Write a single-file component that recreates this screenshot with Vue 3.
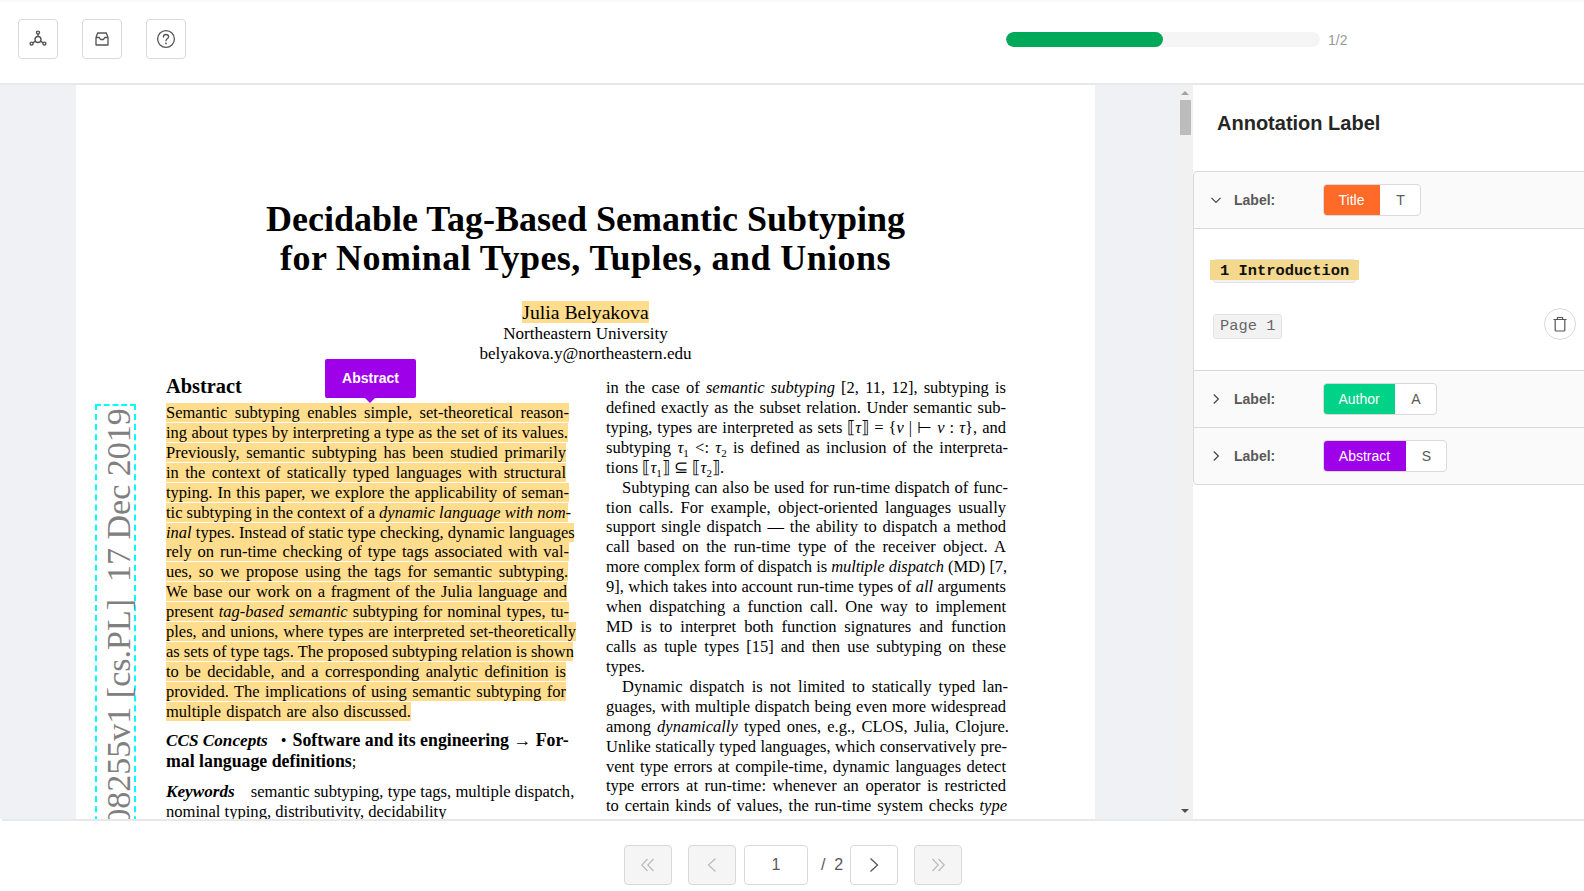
<script setup>
const leftLines = [
  ['Semantic subtyping enables simple, set-theoretical reason-', 403],
  ['ing about types by interpreting a type as the set of its values.', 402],
  ['Previously, semantic subtyping has been studied primarily', 400],
  ['in the context of statically typed languages with structural', 400],
  ['typing. In this paper, we explore the applicability of seman-', 403],
  ['tic subtyping in the context of a *dynamic language with nom-*', 402],
  ['*inal* types. Instead of static type checking, dynamic languages', 408],
  ['rely on run-time checking of type tags associated with val-', 403],
  ['ues, so we propose using the tags for semantic subtyping.', 402],
  ['We base our work on a fragment of the Julia language and', 401],
  ['present *tag-based semantic* subtyping for nominal types, tu-', 403],
  ['ples, and unions, where types are interpreted set-theoretically', 410],
  ['as sets of type tags. The proposed subtyping relation is shown', 407],
  ['to be decidable, and a corresponding analytic definition is', 400],
  ['provided. The implications of using semantic subtyping for', 400],
  ['multiple dispatch are also discussed.', 245]
]
const rightLines = [
  ['in the case of *semantic subtyping* [2, 11, 12], subtyping is', 400],
  ['defined exactly as the subset relation. Under semantic sub-', 400],
  ['typing, types are interpreted as sets ⟦*τ*⟧ = {*ν* | ⊢ *ν* : *τ*}, and', 400],
  ['subtyping *τ*~1~ <: *τ*~2~ is defined as inclusion of the interpreta-', 402],
  ['tions ⟦*τ*~1~⟧ ⊆ ⟦*τ*~2~⟧.', 118],
  ['Subtyping can also be used for run-time dispatch of func-', 386, 'indent'],
  ['tion calls. For example, object-oriented languages usually', 400],
  ['support single dispatch — the ability to dispatch a method', 400],
  ['call based on the run-time type of the receiver object. A', 400],
  ['more complex form of dispatch is *multiple dispatch* (MD) [7,', 401, 'tight'],
  ['9], which takes into account run-time types of *all* arguments', 400],
  ['when dispatching a function call. One way to implement', 400],
  ['MD is to interpret both function signatures and function', 400],
  ['calls as tuple types [15] and then use subtyping on these', 400],
  ['types.', 39],
  ['Dynamic dispatch is not limited to statically typed lan-', 386, 'indent'],
  ['guages, with multiple dispatch being even more widespread', 400],
  ['among *dynamically* typed ones, e.g., CLOS, Julia, Clojure.', 403],
  ['Unlike statically typed languages, which conservatively pre-', 401],
  ['vent type errors at compile-time, dynamic languages detect', 400],
  ['type errors at run-time: whenever an operator is restricted', 400],
  ['to certain kinds of values, the run-time system checks *type*', 401]
]
function parse(s) {
  return s.split(/(\*[^*]*\*|~[^~]*~)/).filter(Boolean).map(p => {
    if (p[0] === '*') return { t: p.slice(1, -1), k: 'i' }
    if (p[0] === '~') return { t: p.slice(1, -1), k: 'sub' }
    return { t: p, k: 'span' }
  })
}
const left = leftLines.map(([s, w]) => ({ segs: parse(s), w }))
const right = rightLines.map(([s, w, c]) => ({ segs: parse(s), w, c }))
const labels = [
  { name: 'Title', key: 'T', cls: 'orange', open: true, w: 57, kw: 41 },
  { name: 'Author', key: 'A', cls: 'green', open: false, w: 72, kw: 42 },
  { name: 'Abstract', key: 'S', cls: 'purple', open: false, w: 83, kw: 41 }
]
</script>

<template>
  <div class="app">
    <header class="top">
      <div class="tools">
        <button class="tool">
          <svg width="18" height="18" viewBox="0 0 18 18" fill="none" stroke="#555" stroke-width="1.4">
            <circle cx="9" cy="9.5" r="3" />
            <circle cx="9" cy="2.6" r="1.5" />
            <circle cx="2.6" cy="13.6" r="1.5" />
            <circle cx="15.4" cy="13.6" r="1.5" />
            <path d="M9 4.1v2.4M6.5 11.2l-2.7 1.6M11.5 11.2l2.7 1.6" />
          </svg>
        </button>
        <button class="tool">
          <svg width="18" height="18" viewBox="0 0 18 18" fill="none" stroke="#555" stroke-width="1.3" stroke-linejoin="round">
            <path d="M3 7.5 4.6 3h8.8L15 7.5V15H3z" />
            <path d="M3 7.5h3.4l1 2h3.2l1-2H15" />
          </svg>
        </button>
        <button class="tool">
          <svg width="20" height="20" viewBox="0 0 20 20" fill="none" stroke="#555" stroke-width="1.3">
            <circle cx="10" cy="10" r="8.4" />
            <path d="M7.4 8c0-1.5 1.1-2.5 2.6-2.5s2.6 1 2.6 2.3c0 2-2.6 2-2.6 4" stroke-linecap="round" />
            <circle cx="10" cy="14.4" r=".9" fill="#555" stroke="none" />
          </svg>
        </button>
      </div>
      <div class="progress">
        <div class="track"><div class="fill"></div></div>
        <span class="count">1/2</span>
      </div>
    </header>

    <main class="main">
      <section class="viewer">
        <article class="page">
          <div class="stamp">arXiv:1912.08255v1&nbsp;[cs.PL]&nbsp;&nbsp;17 Dec 2019</div>
          <h1 class="title">Decidable Tag-Based Semantic Subtyping<br /><span class="title-2">for Nominal Types, Tuples, and Unions</span></h1>
          <div class="authors">
            <div class="author"><span class="mark">Julia Belyakova</span></div>
            <div>Northeastern University</div>
            <div>belyakova.y@northeastern.edu</div>
          </div>
          <div class="cols">
            <div class="col-left">
              <h2 class="abs-head">Abstract</h2>
              <div class="abs-tip">Abstract</div>
              <div class="hl-block">
                <div v-for="(l, i) in left" :key="i" class="line hl" :style="{ width: l.w + 'px' }">
                  <component :is="s.k" v-for="(s, j) in l.segs" :key="j">{{ s.t }}</component>
                </div>
              </div>
              <p class="ccs"><b class="ccs-h"><i>CCS Concepts</i></b><span class="dot">•</span><b class="ccs-b">Software and its engineering → For-<br />mal language definitions</b>;</p>
              <p class="kw"><b class="ccs-h"><i>Keywords</i></b><span class="kw-gap"></span>semantic subtyping, type tags, multiple dispatch,<br />nominal typing, distributivity, decidability</p>
            </div>
            <div class="col-right">
              <div v-for="(l, i) in right" :key="i" class="line" :class="l.c" :style="{ width: l.w + 'px' }">
                <component :is="s.k" v-for="(s, j) in l.segs" :key="j">{{ s.t }}</component>
              </div>
            </div>
          </div>
        </article>
      </section>
      <div class="scroll">
        <span class="arrow up"></span>
        <span class="thumb"></span>
        <span class="spacer"></span>
        <span class="arrow down"></span>
      </div>
      <aside class="panel">
        <h3 class="panel-title">Annotation Label</h3>
        <div class="collapse">
          <template v-for="lab in labels" :key="lab.name">
            <div class="c-head">
              <svg class="chev" width="12" height="12" viewBox="0 0 12 12" fill="none" stroke="#444" stroke-width="1.2">
                <path v-if="lab.open" d="M1.5 3.8 6 8.4l4.5-4.6" />
                <path v-else d="M3.8 1.5 8.4 6l-4.6 4.5" />
              </svg>
              <span class="c-label">Label:</span>
              <div class="tag">
                <span class="tag-name" :class="lab.cls" :style="{ width: lab.w + 'px' }">{{ lab.name }}</span>
                <span class="tag-key" :style="{ width: lab.kw + 'px' }">{{ lab.key }}</span>
              </div>
            </div>
            <div v-if="lab.open" class="c-body">
              <div class="code-wrap"><code class="code"><span class="code-hl">1 Introduction</span></code></div>
              <div class="page-row">
                <code class="page-tag">Page 1</code>
                <button class="del">
                  <svg width="16" height="16" viewBox="0 0 16 16" fill="none" stroke="#555" stroke-width="1.2" stroke-linejoin="round">
                    <path d="M1.5 3.5h13M5.4 3.5V1.5h5.2v2M3.2 3.5v10.6c0 .5.4.9.9.9h7.8c.5 0 .9-.4.9-.9V3.5" />
                  </svg>
                </button>
              </div>
            </div>
          </template>
        </div>
      </aside>
    </main>

    <footer class="bottom">
      <button class="pg disabled first">
        <svg width="16" height="16" viewBox="0 0 16 16" fill="none" stroke="#bbb" stroke-width="1.2"><path d="M7.5 2 1.8 8l5.7 6M13.5 2 7.8 8l5.7 6" /></svg>
      </button>
      <button class="pg disabled">
        <svg width="16" height="16" viewBox="0 0 16 16" fill="none" stroke="#bbb" stroke-width="1.2"><path d="M11.5 1.5 4.5 8l7 6.5" /></svg>
      </button>
      <div class="pg-input">1</div>
      <span class="pg-total">/&nbsp;&nbsp;2</span>
      <button class="pg">
        <svg width="16" height="16" viewBox="0 0 16 16" fill="none" stroke="#555" stroke-width="1.3"><path d="M4.5 1.5 11.5 8l-7 6.5" /></svg>
      </button>
      <button class="pg disabled last">
        <svg width="16" height="16" viewBox="0 0 16 16" fill="none" stroke="#bbb" stroke-width="1.2"><path d="M2.5 2 8.2 8l-5.7 6M8.5 2l5.7 6-5.7 6" /></svg>
      </button>
    </footer>
  </div>
</template>

<style>
html, body { margin: 0; overflow: hidden; }
</style>

<style scoped>
.app {
  width: 1584px;
  height: 891px;
  display: flex;
  flex-direction: column;
  font-family: "Liberation Sans", Arial, sans-serif;
  color: #555;
  background: #fff;
}
button { font: inherit; padding: 0; cursor: pointer; }

.top {
  height: 83px;
  flex: none;
  box-sizing: border-box;
  border-top: 2px solid #fafafa;
  display: flex;
  align-items: center;
  padding: 0 0 7px 18px;
  box-shadow: 0 2px 0 #e8e8e8;
  position: relative;
  z-index: 2;
}
.tools { display: flex; gap: 24px; }
.tool {
  width: 40px;
  height: 40px;
  background: #fff;
  border: 1px solid #d9d9d9;
  border-radius: 4px;
  display: flex;
  align-items: center;
  justify-content: center;
}
.progress {
  margin-left: auto;
  margin-right: 235px;
  display: flex;
  align-items: center;
  gap: 8px;
}
.track { width: 314px; height: 15px; background: #f5f5f5; border-radius: 8px; overflow: hidden; }
.fill { width: 157px; height: 100%; background: #00a85a; border-radius: 8px; }
.count { font-size: 14px; color: #999; width: 21px; line-height: 18px; padding-top: 1px; }

.main { flex: 1; display: flex; min-height: 0; margin-top: 2px; }
.viewer {
  width: 1177px;
  flex: none;
  background: #eff1f5;
  overflow: hidden;
  padding-left: 76px;
  box-sizing: border-box;
}
.page {
  width: 1019px;
  height: 1100px;
  background: #fff;
  position: relative;
  color: #000;
  font-family: "Liberation Serif", "Times New Roman", serif;
  font-size: 16.5px;
}
.stamp {
  position: absolute;
  left: 19px;
  top: 319px;
  width: 41px;
  height: 760px;
  box-sizing: border-box;
  border: 2px dashed #00ffff;
  writing-mode: vertical-rl;
  transform: rotate(180deg);
  font-size: 34px;
  line-height: 33px;
  color: #808080;
  white-space: nowrap;
  text-align: right;
  padding: 2px 5px 2px 0;
}
.title {
  margin: 0;
  padding-top: 115px;
  text-align: center;
  font-size: 36px;
  line-height: 39px;
  font-weight: 700;
}
.title-2 { letter-spacing: .42px; }
.authors {
  margin-top: 22px;
  text-align: center;
  line-height: 20px;
  font-size: 17.1px;
}
.author { font-size: 19.7px; line-height: 24px; }
.mark { background: #ffdd8d; }
.cols { display: flex; padding-left: 90px; }
.col-left { width: 440px; position: relative; }
.abs-head { margin: 10px 0 0; font-size: 20.4px; line-height: 24px; font-weight: 700; }
.abs-tip {
  position: absolute;
  left: 159px;
  top: -5px;
  width: 91px;
  height: 39px;
  border-radius: 2px;
  background: #9d00e9;
  color: #fff;
  font-family: "Liberation Sans", Arial, sans-serif;
  font-weight: 700;
  font-size: 14px;
  line-height: 39px;
  text-align: center;
}
.abs-tip::after {
  content: "";
  position: absolute;
  left: 40px;
  top: 39px;
  border: 5px solid transparent;
  border-top-color: #9d00e9;
  border-bottom: 0;
}
.hl-block { margin-top: 5px; }
.line {
  height: 19.93px;
  line-height: 19.93px;
  text-align: justify;
  text-align-last: justify;
  white-space: nowrap;
}
.tight { letter-spacing: -.1px; }
.hl { background: linear-gradient(#ffdd8d, #ffdd8d) no-repeat 0 0 / 100% 19px; }
.ccs, .kw { margin: 0; line-height: 20px; white-space: nowrap; }
.ccs { margin-top: 8px; }
.kw { margin-top: 10px; font-size: 16.6px; }
.ccs-h { font-size: 17.2px; }
.ccs-b { font-size: 17.8px; }
.dot { margin: 0 6px 0 13px; }
.kw-gap { display: inline-block; width: 16px; }
.col-right { padding-left: 0; margin-top: 14px; }
.indent { margin-left: 16px; }
sub { font-size: 11px; line-height: 0; }

.scroll {
  width: 16px;
  flex: none;
  background: #f1f1f1;
  display: flex;
  flex-direction: column;
  align-items: center;
}
.arrow { width: 0; height: 0; border: 4px solid transparent; flex: none; }
.arrow.up { border-bottom: 4px solid #a3a3a3; border-top: 0; margin-top: 6px; }
.arrow.down { border-top: 4px solid #505050; border-bottom: 0; margin-bottom: 6px; }
.thumb { width: 11px; height: 35px; background: #bcbcbc; margin-top: 5px; flex: none; }
.spacer { flex: 1; }

.panel { flex: 1; min-width: 0; overflow: hidden; }
.panel-title {
  margin: 0;
  padding: 24px 0 0 24px;
  height: 86px;
  box-sizing: border-box;
  font-size: 20px;
  line-height: 28px;
  font-weight: 700;
  color: #262626;
}
.collapse {
  width: 410px;
  border: 1px solid #d9d9d9;
  border-radius: 4px;
  background: #fafafa;
  box-sizing: border-box;
}
.c-head {
  height: 56px;
  display: flex;
  align-items: center;
  padding-left: 16px;
  border-bottom: 1px solid #d9d9d9;
  box-sizing: content-box;
}
.c-head:last-child { border-bottom: 0; }
.chev { flex: none; }
.c-label { width: 89px; margin-left: 12px; font-size: 14px; font-weight: 700; color: #595959; }
.tag { display: flex; height: 32px; box-sizing: border-box; border: 1px solid #d9d9d9; border-radius: 4px; background: #fff; overflow: hidden; font-size: 14px; }
.tag-name, .tag-key { display: flex; align-items: center; justify-content: center; box-sizing: border-box; }
.tag-name { color: #fff; margin: -1px 0 -1px -1px; }
.tag-key { color: #595959; margin-right: -1px; }
.orange { background: #ff6a29; }
.green { background: #00d287; }
.purple { background: #9d00e9; }
.c-body {
  background: #fff;
  height: 142px;
  border-bottom: 1px solid #d9d9d9;
  box-sizing: border-box;
  padding: 30px 0 0 19px;
}
code { font-family: "Liberation Mono", "Courier New", monospace; font-size: 15.4px; white-space: nowrap; }
.code-wrap { height: 24px; }
.code {
  display: inline-block;
  height: 24px;
  line-height: 20px;
  padding: 0 6px;
  border-radius: 3px;
  background: #f2f2f2;
  border: 1px solid #e3e3e3;
  box-sizing: border-box;
  font-weight: 700;
  color: #000;
  width: 143px;
}
.code-hl { background: #f3d88d; display: inline-block; margin: 0 -10px; padding: 0 10px; height: 20px; line-height: 22px; color: #111; }
.page-row { display: flex; align-items: center; padding-top: 25px; width: 363px; justify-content: space-between; }
.page-tag {
  display: inline-block;
  height: 25px;
  line-height: 23px;
  padding: 0 6px;
  margin-top: 4px;
  box-sizing: border-box;
  background: #f2f2f2;
  border: 1px solid #e3e3e3;
  border-radius: 3px;
  color: #666;
}
.del {
  width: 32px;
  height: 32px;
  border-radius: 50%;
  border: 1px solid #d9d9d9;
  background: #fff;
  display: flex;
  align-items: center;
  justify-content: center;
}

.bottom {
  height: 72px;
  flex: none;
  box-sizing: border-box;
  border-top: 2px solid #e8e8e8;
  display: flex;
  align-items: center;
  justify-content: center;
  padding: 24px 0 6px;
  margin-left: 2px;
}
.pg {
  width: 48px;
  height: 40px;
  background: #fff;
  border: 1px solid #d9d9d9;
  border-radius: 4px;
  display: flex;
  align-items: center;
  justify-content: center;
  flex: none;
}
.pg.disabled { background: #f5f5f5; }
.first { margin-right: 16px; }
.last { margin-left: 16px; }
.pg-input {
  width: 64px;
  height: 40px;
  box-sizing: border-box;
  border: 1px solid #d9d9d9;
  border-radius: 4px;
  margin-left: 8px;
  text-align: center;
  line-height: 38px;
  font-size: 16px;
  color: #595959;
}
.pg-total { width: 42px; box-sizing: border-box; padding-left: 13px; font-size: 16px; color: #595959; }
</style>
